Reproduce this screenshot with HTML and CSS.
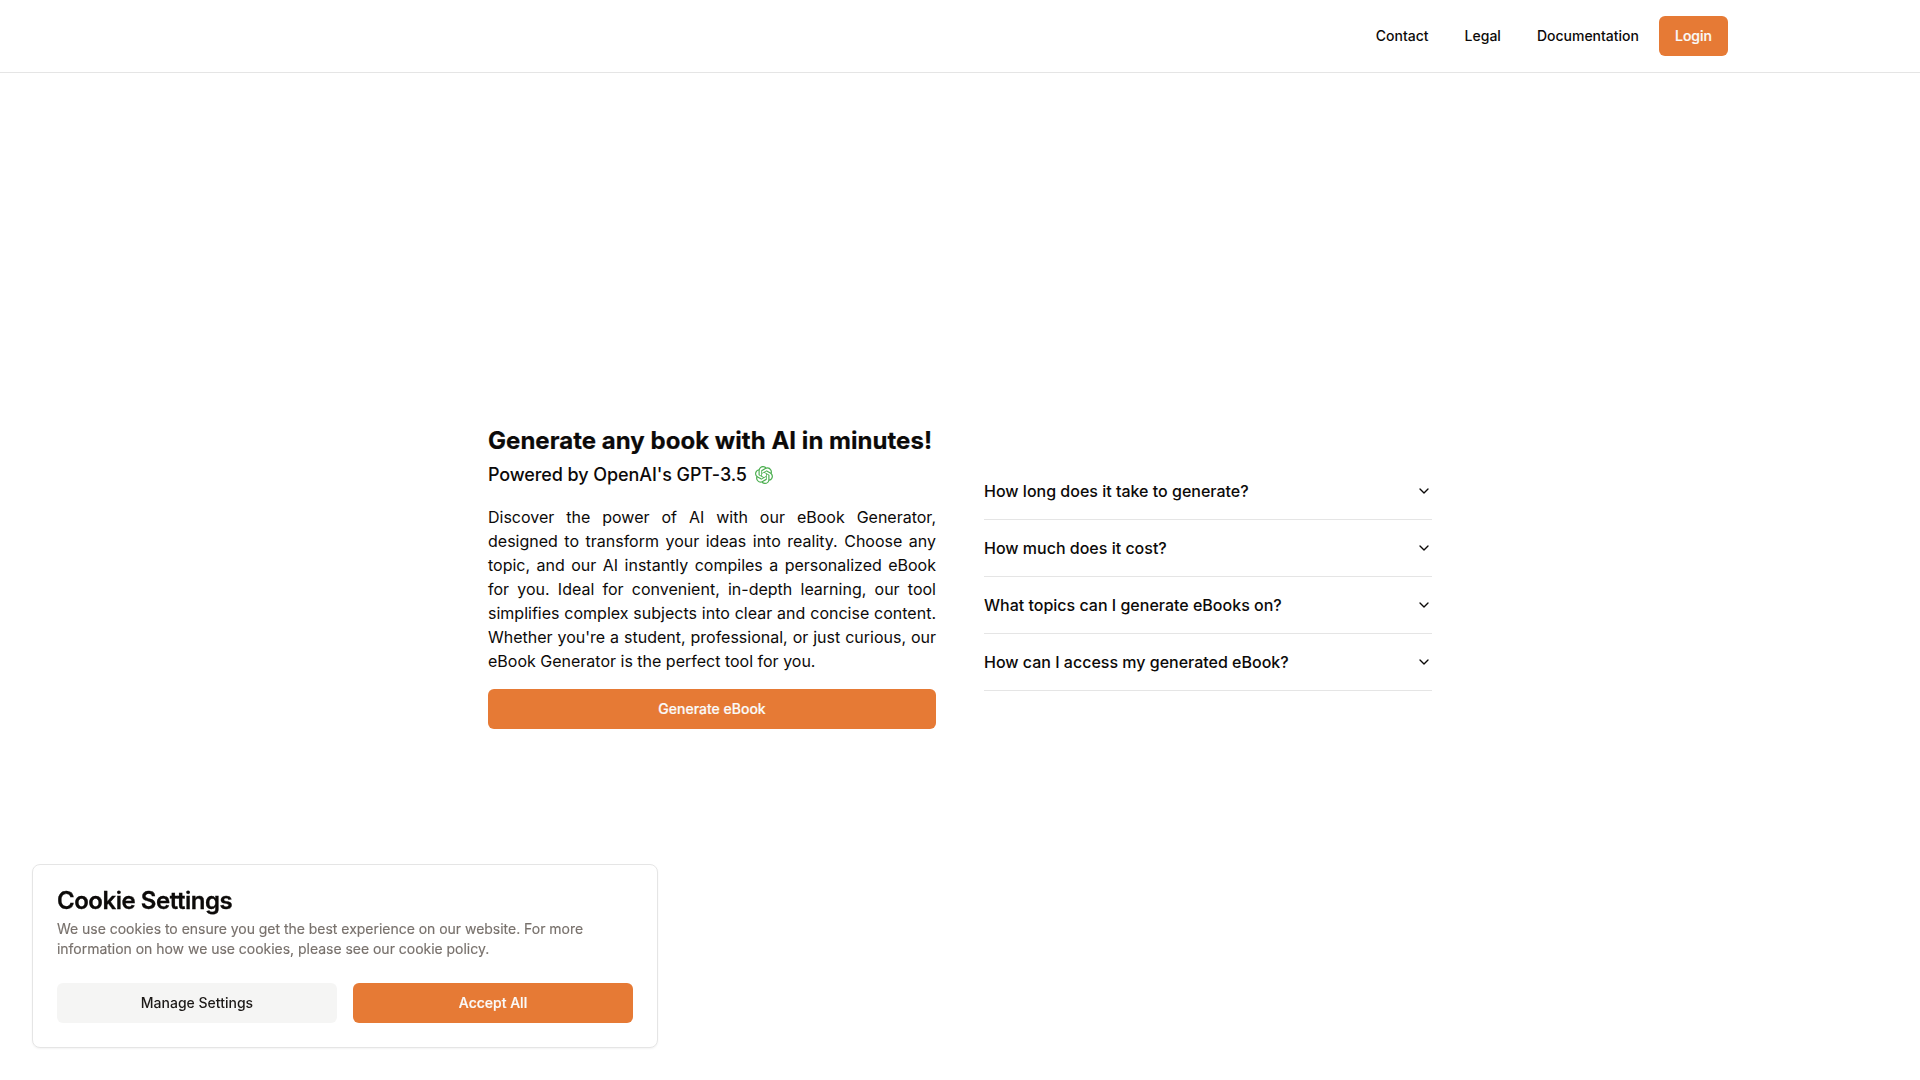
FILE: index.html
```html
<!DOCTYPE html>
<html lang="en">
<head>
<meta charset="utf-8">
<title>eBook Generator</title>
<link rel="stylesheet" href="styles.css">
</head>
<body>
<svg class="sprite" aria-hidden="true">
  <symbol id="chevron" viewBox="0 0 24 24"><path d="m6 9 6 6 6-6" fill="none" stroke="currentColor" stroke-width="2" stroke-linecap="round" stroke-linejoin="round"/></symbol>
</svg>
<header class="header">
  <nav class="nav">
    <a class="nav-link">Contact</a>
    <a class="nav-link">Legal</a>
    <a class="nav-link">Documentation</a>
    <a class="button primary">Login</a>
  </nav>
</header>
<main class="main">
  <section class="intro">
    <div class="headings">
      <h1 class="title">Generate any book with AI in minutes!</h1>
      <h2 class="subtitle">Powered by OpenAI's GPT-3.5
        <svg class="logo" viewBox="0 0 24 24" fill="currentColor"><path d="M22.2819 9.8211a5.9847 5.9847 0 0 0-.5157-4.9108 6.0462 6.0462 0 0 0-6.5098-2.9A6.0651 6.0651 0 0 0 4.9807 4.1818a5.9847 5.9847 0 0 0-3.9977 2.9 6.0462 6.0462 0 0 0 .7427 7.0966 5.98 5.98 0 0 0 .511 4.9107 6.051 6.051 0 0 0 6.5146 2.9001A5.9847 5.9847 0 0 0 13.2599 24a6.0557 6.0557 0 0 0 5.7718-4.2058 5.9894 5.9894 0 0 0 3.9977-2.9001 6.0557 6.0557 0 0 0-.7475-7.0729zm-9.022 12.6081a4.4755 4.4755 0 0 1-2.8764-1.0408l.1419-.0804 4.7783-2.7582a.7948.7948 0 0 0 .3927-.6813v-6.7369l2.02 1.1686a.071.071 0 0 1 .038.052v5.5826a4.504 4.504 0 0 1-4.4945 4.4944zm-9.6607-4.1254a4.4708 4.4708 0 0 1-.5346-3.0137l.142.0852 4.783 2.7582a.7712.7712 0 0 0 .7806 0l5.8428-3.3685v2.3324a.0804.0804 0 0 1-.0332.0615L9.74 19.9502a4.4992 4.4992 0 0 1-6.1408-1.6464zM2.3408 7.8956a4.485 4.485 0 0 1 2.3655-1.9728V11.6a.7664.7664 0 0 0 .3879.6765l5.8144 3.3543-2.0201 1.1685a.0757.0757 0 0 1-.071 0l-4.8303-2.7865A4.504 4.504 0 0 1 2.3408 7.872zm16.5963 3.8558L13.1038 8.364 15.1192 7.2a.0757.0757 0 0 1 .071 0l4.8303 2.7913a4.4944 4.4944 0 0 1-.6765 8.1042v-5.6772a.79.79 0 0 0-.407-.667zm2.0107-3.0231l-.142-.0852-4.7735-2.7818a.7759.7759 0 0 0-.7854 0L9.409 9.2297V6.8974a.0662.0662 0 0 1 .0284-.0615l4.8303-2.7866a4.4992 4.4992 0 0 1 6.6802 4.66zM8.3065 12.863l-2.02-1.1638a.0804.0804 0 0 1-.038-.0567V6.0742a4.4992 4.4992 0 0 1 7.3757-3.4537l-.142.0805L8.704 5.459a.7948.7948 0 0 0-.3927.6813zm1.0976-2.3654l2.602-1.4998 2.6069 1.4998v2.9994l-2.5974 1.4997-2.6067-1.4997Z"/></svg>
      </h2>
    </div>
    <p class="lead">Discover the power of AI with our eBook Generator, designed to transform your ideas into reality. Choose any topic, and our AI instantly compiles a personalized eBook for you. Ideal for convenient, in-depth learning, our tool simplifies complex subjects into clear and concise content. Whether you're a student, professional, or just curious, our eBook Generator is the perfect tool for you.</p>
    <a class="button primary">Generate eBook</a>
  </section>
  <section class="faq">
    <div class="question">How long does it take to generate?<svg class="chevron"><use href="#chevron"/></svg></div>
    <div class="question">How much does it cost?<svg class="chevron"><use href="#chevron"/></svg></div>
    <div class="question">What topics can I generate eBooks on?<svg class="chevron"><use href="#chevron"/></svg></div>
    <div class="question">How can I access my generated eBook?<svg class="chevron"><use href="#chevron"/></svg></div>
  </section>
</main>
<aside class="cookies">
  <h3 class="cookies-title">Cookie Settings</h3>
  <p class="cookies-text">We use cookies to ensure you get the best experience on our website. For more information on how we use cookies, please see our cookie policy.</p>
  <div class="cookies-actions">
    <a class="button secondary">Manage Settings</a>
    <a class="button primary">Accept All</a>
  </div>
</aside>
</body>
</html>
```
FILE: styles.css
```css
* {
  box-sizing: border-box;
  margin: 0;
}

body {
  display: flex;
  flex-direction: column;
  height: 100vh;
  overflow: hidden;
  background: #fff;
  color: #0c0a09;
  font: 400 16px/24px Inter, sans-serif;
}

.sprite {
  position: absolute;
  width: 0;
  height: 0;
}

.header {
  height: 73px;
  padding: 16px 192px;
  border-bottom: 1px solid #e5e5e5;
}

.nav {
  display: flex;
  justify-content: flex-end;
  gap: 4px;
}

.nav-link,
.button {
  display: flex;
  align-items: center;
  justify-content: center;
  height: 40px;
  padding: 0 16px;
  border-radius: 6px;
  font-size: 14px;
  line-height: 20px;
  font-weight: 500;
}

.primary {
  background: #e67a35;
  color: #fafaf9;
  -webkit-text-stroke: 0.2px #fafaf9;
}

.secondary {
  background: #f5f5f4;
  color: #1c1917;
}

.main {
  flex: 1;
  display: grid;
  grid-template-columns: 448px 448px;
  gap: 48px;
  align-items: center;
  justify-content: center;
}

.intro {
  display: flex;
  flex-direction: column;
  gap: 16px;
}

.headings {
  display: flex;
  flex-direction: column;
  gap: 4px;
}

.title {
  font-size: 24px;
  line-height: 32px;
  font-weight: 700;
  letter-spacing: 0.035px;
  white-space: nowrap;
  -webkit-text-stroke: 0.2px #0c0a09;
}

.subtitle {
  display: flex;
  align-items: center;
  gap: 8px;
  font-size: 18px;
  line-height: 28px;
  font-weight: 500;
  letter-spacing: -0.09px;
}

.logo {
  width: 18px;
  height: 18px;
  color: #4caf50;
}

.lead {
  text-align: justify;
}

.question {
  display: flex;
  align-items: center;
  justify-content: space-between;
  padding: 16px 0;
  border-bottom: 1px solid #e5e5e5;
  font-weight: 500;
}

.chevron {
  width: 16px;
  height: 16px;
}

.cookies {
  position: fixed;
  left: 32px;
  bottom: 32px;
  width: 626px;
  padding: 24px;
  border: 1px solid #e5e5e5;
  border-radius: 8px;
  background: #fff;
  box-shadow: 0 1px 2px rgba(0, 0, 0, 0.05);
}

.cookies-title {
  font-size: 24px;
  line-height: 24px;
  font-weight: 600;
  letter-spacing: -0.47px;
  -webkit-text-stroke: 0.3px #0c0a09;
}

.cookies-text {
  margin: 6px 0 24px;
  color: #78716c;
  font-size: 14px;
  line-height: 20px;
  letter-spacing: -0.025px;
  -webkit-text-stroke: 0.15px #78716c;
}

.cookies-actions {
  display: grid;
  grid-template-columns: 1fr 1fr;
  gap: 16px;
}
```
